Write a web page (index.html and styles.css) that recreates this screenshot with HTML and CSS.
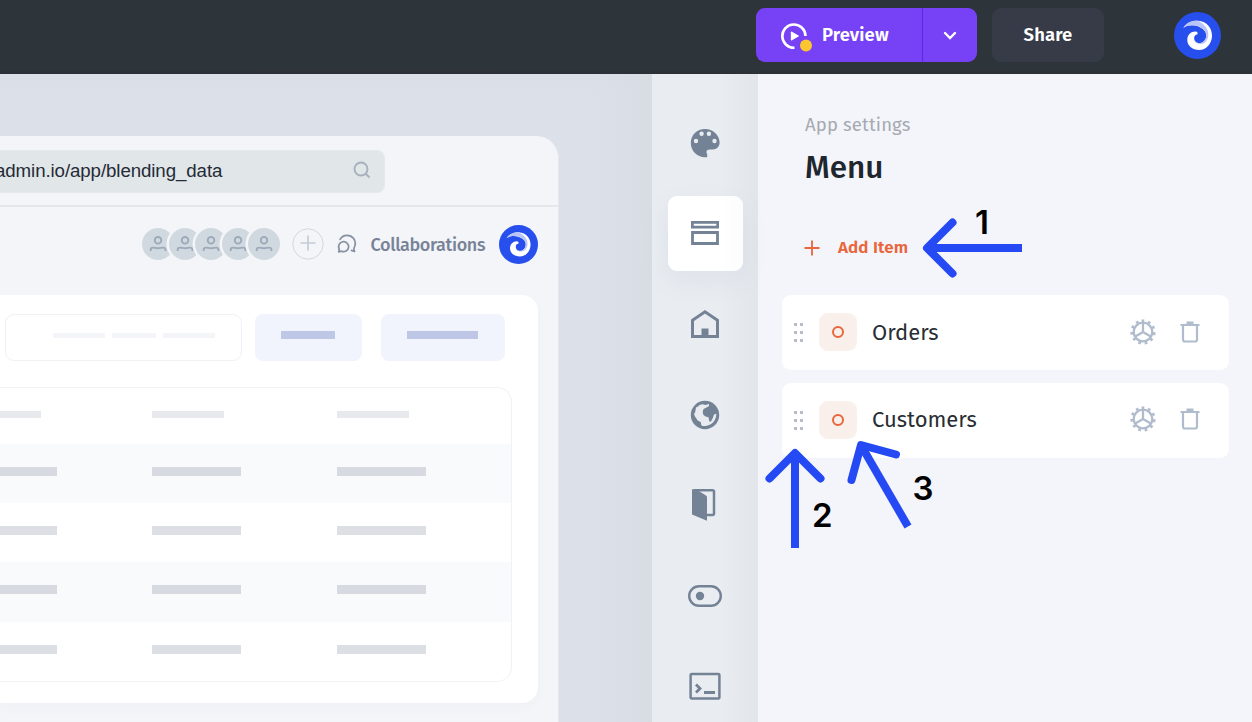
FILE: index.html
```html
<!DOCTYPE html>
<html lang="en">
<head>
<meta charset="utf-8">
<title>App settings – Menu</title>
<link rel="stylesheet" href="styles.css">
</head>
<body>
<svg class="defs" width="0" height="0">
  <symbol id="swirl" viewBox="0 0 47 47">
    <circle cx="23.5" cy="23.5" r="23.5" fill="#264fee"/>
    <path fill="#fff" d="M9.3 15.7C13 10 19 8.5 24 8.7C33 9.5 38.3 16 38 24C37.7 32 32 38 25.3 38C18 38 13.3 33.5 13.3 28C13.3 23 17 19.5 21.5 19.6C23.5 19.8 24.2 21.3 23.2 22.6C20.5 22.5 19.5 26 20.7 28.5C22 31.5 26 32 29 30C33 27 33.500 21 29.500 17.500C24 12.500 15 11.800 9.300 15.700Z"/>
    <path fill="#b9c4fa" d="M9.300 15.700C13 10 19 8.200 24.500 9C30 12 35 17 34.300 23.500C33.800 29 30 32.600 25.500 32C22 31.500 20.700 29 20.600 28C22.500 31.500 26 32 29 30C33 27 33.500 21 29.500 17.500C24 12.500 15 11.800 9.300 15.700Z"/>
  </symbol>
  <symbol id="person" viewBox="0 0 32 32">
    <g fill="none" stroke="#9daab9" stroke-width="1.9"><circle cx="16" cy="12.3" r="3.3"/><path d="M8.7 23v-1.4q0-2 2.2-2c2 0 2.800.7 5.100.7s3.200-.7 5.200-.7q2.200 0 2.200 2v1.400"/></g>
  </symbol>
  <symbol id="gear" viewBox="0 0 28 28">
    <g fill="none" stroke="#b0bccd">
      <circle cx="14" cy="14" r="9.300" stroke-width="2.300"/>
      <circle cx="14" cy="14" r="11.300" stroke-width="2.600" stroke-dasharray="2.700 3.755" transform="rotate(-97 14 14)"/>
      <path d="M14 5v9l-7.800 4.500M14 14l7.800 4.500" stroke-width="2.300"/>
    </g>
  </symbol>
  <symbol id="trash" viewBox="0 0 20 22">
    <path d="M3 4v14.500q0 2 2 2h10q2 0 2-2V4M0.500 4h19" fill="none" stroke="#b0bccd" stroke-width="2.200"/><path d="M6.500.500h7V3h-7z" fill="#b0bccd"/>
  </symbol>
  <symbol id="grip" viewBox="0 0 9 19">
    <path fill="#b7bdc9" d="M0 0h3v3H0zM6 0h3v3H6zM0 8h3v3H0zM6 8h3v3H6zM0 16h3v3H0zM6 16h3v3H6z"/>
  </symbol>
</svg>

<header class="topbar">
  <div class="preview">
    <div class="preview-main">
      <svg width="34" height="34" viewBox="0 0 34 34"><path d="M26.500 16.500A11.600 11.600 0 1 0 15.500 28.200" transform="translate(1 -.500)" fill="none" stroke="#fff" stroke-width="2.600"/><path d="M12.800 12.300q0-1.200 1.200-.600l6.500 3.700q.900.600 0 1.200L14 20.300q-1.200.600-1.200-.600z" fill="#fff"/><circle cx="28" cy="25.500" r="6" fill="#fbc62f"/></svg>
      <span class="preview-text">Preview</span>
    </div>
    <div class="preview-more"><svg width="14" height="10" viewBox="0 0 14 10"><path d="M2 2l5 5 5-5" fill="none" stroke="#fff" stroke-width="2.400" stroke-linecap="round"/></svg></div>
  </div>
  <div class="share"><span>Share</span></div>
  <svg class="avatar" width="47" height="47"><use href="#swirl"/></svg>
</header>

<main class="workspace">
  <section class="canvas">
    <div class="browser">
      <div class="address-row">
        <div class="address"><span>admin.io/app/blending_data</span><svg width="18" height="18" viewBox="0 0 18 18"><g fill="none" stroke="#a7b1bd" stroke-width="1.900"><circle cx="8" cy="8" r="6.500"/><path d="M12.500 12.500l4 4"/></g></svg></div>
      </div>
      <div class="people-row">
        <div class="people">
          <svg class="person"><use href="#person"/></svg><svg class="person"><use href="#person"/></svg><svg class="person"><use href="#person"/></svg><svg class="person"><use href="#person"/></svg><svg class="person"><use href="#person"/></svg>
        </div>
        <svg class="add-person" width="32" height="32" viewBox="0 0 32 32"><circle cx="16" cy="16" r="15.200" fill="none" stroke="#d2d6df"/><path d="M16 7.500v15M8.500 15h15" stroke="#c3ccd8" stroke-width="1.700"/></svg>
        <svg class="chat" width="20" height="20" viewBox="0 0 20 20"><g fill="none" stroke="#8590a0" stroke-width="1.700" stroke-linecap="round" stroke-linejoin="round"><path d="M3 5.400C5 2.300 7.500 1.200 10.500 1.400c5 .300 8 4 7.800 8.400-.1 2-.7 3.300-1.500 4.600l.7 3-3-1"/><path d="M1.700 17.800l.5-2.800a5 5 0 1 1 2.300 2.200z"/></g></svg>
        <span class="collab">Collaborations</span>
        <svg class="small-avatar" width="39" height="39"><use href="#swirl"/></svg>
      </div>
      <div class="data-card">
        <div class="tools">
          <div class="search"><i class="s1"></i><i class="s2"></i><i class="s3"></i></div>
          <div class="tool"><i></i></div>
          <div class="tool wide"><i></i></div>
        </div>
        <div class="table">
          <div class="row head"><i></i><i></i><i></i></div>
          <div class="row tint"><i></i><i></i><i></i></div>
          <div class="row"><i></i><i></i><i></i></div>
          <div class="row tint tall"><i></i><i></i><i></i></div>
          <div class="row tall"><i></i><i></i><i></i></div>
        </div>
      </div>
    </div>
  </section>

  <nav class="rail">
    <a class="rail-item"><svg width="30" height="30" viewBox="-1 -1 30 30"><path fill="#748295" d="M14 0C6 0-.2 6-.2 14S6 28.200 14 28.200h2.200v-3c0-.7-1-1.300-.8-2.200.3-1.600 1.500-2.400 3.600-2.400h2.800c4 0 6.800-3 6.800-7C28.500 6 22 0 14 0z"/><g fill="#e8ecf1"><circle cx="5" cy="12" r="2.200"/><circle cx="10.600" cy="4.800" r="2.200"/><circle cx="17.900" cy="4.800" r="2.200"/><circle cx="23.500" cy="12" r="2.200"/></g></svg></a>
    <a class="rail-item active"><svg width="28" height="24" viewBox="0 0 28 24"><path d="M1.300 1.300h25.400v4.900H1.300zM1.500 11.500h25v11h-25z" fill="none" stroke="#748295" stroke-width="2.800"/></svg></a>
    <a class="rail-item"><svg width="30" height="30" viewBox="0 0 30 30"><path d="M2.500 27.500V11.200L15 2.700l12.500 8.500v16.300z" fill="none" stroke="#748295" stroke-width="3"/><path d="M11.500 19.500h7v7h-7z" fill="#748295"/></svg></a>
    <a class="rail-item lowered"><svg width="30" height="30" viewBox="0 0 30 30"><circle cx="15" cy="15" r="14.200" fill="#748295"/><path fill="#e8ecf1" d="M6 7.500L8 6.500 9.500 5l3-.8 3 .8 3.500-1L19 6l-2.500 1.500-3 1.500-.8 3 .6 2.700 2.200 1.800 3 .8.8 4.200h1.700l1.800-3.500 1.200-3.500 2.300-.8c0 4-1.300 6.700-3.300 8.800-2 2-4.500 3-7.500 3.600-2 0-3.500-.3-4-.6l-.8-3.500-3-1.500L5 16.500l-1-2.500 1.200-2z"/></svg></a>
    <a class="rail-item"><svg class="door" width="26" height="34" viewBox="0 0 26 34"><path d="M3 2.300h18.500q1.500 0 1.500 1.500v21.700q0 1.500-1.500 1.500H15" fill="none" stroke="#748295" stroke-width="2.500"/><path fill="#748295" d="M1 1.200h4l10 6.300q1 .500 1 1.700V32.700L1 26.500z"/></svg></a>
    <a class="rail-item lowered"><svg width="34" height="22" viewBox="0 0 34 22"><rect x="1.200" y="1.200" width="31.600" height="19.600" rx="9.800" fill="none" stroke="#748295" stroke-width="2.400"/><circle cx="12" cy="11" r="4.200" fill="#748295"/></svg></a>
    <a class="rail-item"><svg width="32" height="28" viewBox="0 0 32 28"><rect x="1.600" y="2" width="28.800" height="24.500" rx="1" fill="none" stroke="#748295" stroke-width="2.500"/><path d="M7 12.500l4 4L7 20.500M15 20.500h11" fill="none" stroke="#748295" stroke-width="2.800"/></svg></a>
  </nav>

  <aside class="panel">
    <div class="eyebrow">App settings</div>
    <h1>Menu</h1>
    <div class="add-item"><svg width="16" height="16" viewBox="0 0 16 16"><path d="M8 .5v15M.5 8h15" stroke="#e9653a" stroke-width="1.800"/></svg><span>Add Item</span></div>
    <div class="menu-list">
      <div class="menu-item"><svg class="grip" width="9" height="19"><use href="#grip"/></svg><span class="badge"><i></i></span><span class="label">Orders</span><svg class="gear" width="28" height="28"><use href="#gear"/></svg><svg class="trash" width="20" height="22"><use href="#trash"/></svg></div>
      <div class="menu-item second"><svg class="grip" width="9" height="19"><use href="#grip"/></svg><span class="badge"><i></i></span><span class="label">Customers</span><svg class="gear" width="28" height="28"><use href="#gear"/></svg><svg class="trash" width="20" height="22"><use href="#trash"/></svg></div>
    </div>
  </aside>
</main>

<svg class="annotations" width="1252" height="722" viewBox="0 0 1252 722">
  <g fill="none" stroke="#254af4" stroke-width="8" stroke-linejoin="round">
    <path d="M1022 248H928"/><path d="M952.500 222.500L927 248l25.500 25.500" stroke-linecap="round"/>
    <path d="M795 548v-93"/><path d="M769.500 478.500L795 453l25.500 25.500" stroke-linecap="round"/>
    <path d="M908 526.500L862 447"/><path d="M851.500 480L861 445l35 9.500" stroke-linecap="round"/>
  </g>
  <text x="975" y="234">1</text>
  <text x="812" y="527">2</text>
  <text x="912.5" y="500">3</text>
</svg>
</body>
</html>
```
FILE: styles.css
```css
* { box-sizing: border-box; }
body { margin: 0; width: 1252px; height: 722px; overflow: hidden; font-family: "Fira Sans", "Noto Sans", sans-serif; background: #f3f5fa; position: relative; }
.defs { display: block; height: 0; }
i { display: block; }
svg { flex: none; }

.topbar { height: 74px; background: linear-gradient(#2d343a 69px, #2b3036); display: flex; align-items: flex-start; padding: 8px 31px 0 756px; color: #fff; font-weight: 600; font-size: 18.500px; }
.preview { width: 221px; height: 54px; display: flex; border-radius: 9px; background: #7741f5; overflow: hidden; }
.preview-main { width: 167px; display: flex; align-items: center; border-right: 1px solid #5c28e5; padding-left: 22px; gap: 10px; }
.preview-text { letter-spacing: .1px; }
.preview-main svg { margin-top: 4px; }
.preview-main span, .share span { white-space: nowrap; }
.preview-more { flex: 1; display: grid; place-items: center; padding-top: 2px; }
.share { width: 112px; height: 54px; margin-left: 15px; border-radius: 9px; background: #363b47; display: grid; place-items: center; letter-spacing: .1px; }
.avatar { margin: 4px 0 0 auto; }

.workspace { display: flex; height: 648px; }
.canvas { width: 652px; overflow: hidden; background: linear-gradient(90deg, rgba(215,220,227,0) 590px, #d8dde4), linear-gradient(#dadfe8, #dce0e8 20px); padding-top: 62px; }
.browser { width: 559px; height: 586px; background: #f3f5f9; border-top-right-radius: 22px; border-right: 1px solid #e4e7f0; }
.address-row { height: 71px; padding-top: 14px; border-bottom: 2px solid #e5e7ed; }
.address { width: 385px; height: 43px; border-radius: 0 8px 8px 0; background: #e1e6e9; display: flex; align-items: center; justify-content: space-between; padding-right: 13px; font: 18.700px "Liberation Sans", Arial, sans-serif; color: #252a36; border: 1px solid #e5e9ed; border-left: 0; }
.address span { margin: -2px 0 0 -5px; letter-spacing: -.09px; white-space: nowrap; }
.address svg { margin-top: -4px; }
.people-row { height: 88px; display: flex; align-items: center; padding: 0 20px 14px 142px; }
.people { display: flex; }
.person { width: 32px; height: 32px; border-radius: 50%; background: #d1d9e0; margin-right: -5.400px; box-shadow: 0 0 0 2.500px #f3f5f9; }
.add-person { margin-left: 17px; }
.chat { margin-left: 13px; }
.collab { margin-left: 13.500px; width: 116px; font-size: 18px; font-weight: 500; color: #788397; letter-spacing: -.36px; white-space: nowrap; padding-top: 1px; }
.small-avatar { margin-left: 12px; }
.data-card { width: 538px; height: 408px; background: #fff; border-radius: 0 16px 16px 0; padding-top: 19px; box-shadow: 0 5px 12px rgba(70,80,120,.025); }
.tools { display: flex; padding-left: 5px; height: 47px; }
.search { width: 237px; border: 1px solid #f0f1f5; border-radius: 9px; display: flex; padding: 18px 0 0 47px; gap: 7px; }
.search i { height: 5px; background: #f3f5f8; }
.s1 { width: 52px; } .s2 { width: 44px; } .s3 { width: 52px; }
.tool { width: 107px; margin-left: 13px; background: #f1f4fc; border-radius: 8px; padding: 17px 0 0 26px; }
.tool i { width: 54px; height: 8px; background: #bec7e5; }
.tool.wide { width: 124px; margin-left: 19px; }
.tool.wide i { width: 71px; }
.table { width: 512px; height: 295px; margin-top: 26px; border: 1px solid #f0f2f6; border-left: 0; border-radius: 0 15px 15px 0; overflow: hidden; }
.row { height: 59px; display: grid; grid-template-columns: 152px 184.500px 1fr; align-items: center; padding-bottom: 4px; }
.row i { width: 89px; height: 9px; background: #dcdfe4; }
.row i:first-child { width: 57px; }
.row.head { height: 56px; }
.row.head i { width: 72px; height: 7px; background: #e7e9ed; }
.row.head i:first-child { width: 41px; }
.row.tint { background: #f9fafc; }
.row.tint i { background: #d8dae2; }
.row.tall { height: 60px; padding-bottom: 5px; }

.rail { width: 106px; background: linear-gradient(90deg, #e9edf2 65%, #e2e6eb); display: flex; flex-direction: column; align-items: center; padding-top: 31px; gap: 15.600px; }
.rail-item { width: 75px; height: 75px; flex: none; border-radius: 9px; display: grid; place-items: center; }
.active { background: linear-gradient(90deg, #fff 70%, #fbfcfc); box-shadow: 0 10px 26px rgba(115,125,140,.09); }
.lowered { padding-top: 2px; }
.door { margin-left: -2px; }

.panel { width: 494px; padding: 39px 23px 0 24px; }
.eyebrow { height: 24px; line-height: 24px; margin-left: 23px; font-size: 18.500px; color: #a6a9b1; letter-spacing: .15px; }
h1 { height: 40px; line-height: 40px; margin: 11px 0 0 23px; font-size: 31.500px; font-weight: 500; color: #20262d; letter-spacing: 0; }
.add-item { height: 30px; margin-top: 44px; display: flex; align-items: center; padding: 0 0 0 21.500px; gap: 18.500px; font-size: 17px; font-weight: 600; color: #e9653a; letter-spacing: .1px; }
.add-item svg { margin-top: 2px; }
.menu-list { display: flex; flex-direction: column; gap: 13px; margin-top: 33px; }
.menu-item { height: 75px; display: flex; align-items: center; background: #fff; border-radius: 9px; padding: 0 29px 0 12px; color: #292e34; font-size: 22px; letter-spacing: 0; }
.badge { width: 38px; height: 38px; margin: -1px 15px 0 16px; background: #faf0eb; border-radius: 9px; display: grid; place-items: center; }
.badge i { width: 12px; height: 12px; border: 2px solid #e9653a; border-radius: 50%; }
.gear { margin: -2px 23px 0 auto; }
.trash { margin-top: -2px; }
.second .label { margin-top: -2px; }
.second .gear, .second .trash { margin-top: -4px; }

.annotations { position: absolute; left: 0; top: 0; pointer-events: none; }
.annotations text { font: 600 33px Inter, sans-serif; fill: #000; }
```
